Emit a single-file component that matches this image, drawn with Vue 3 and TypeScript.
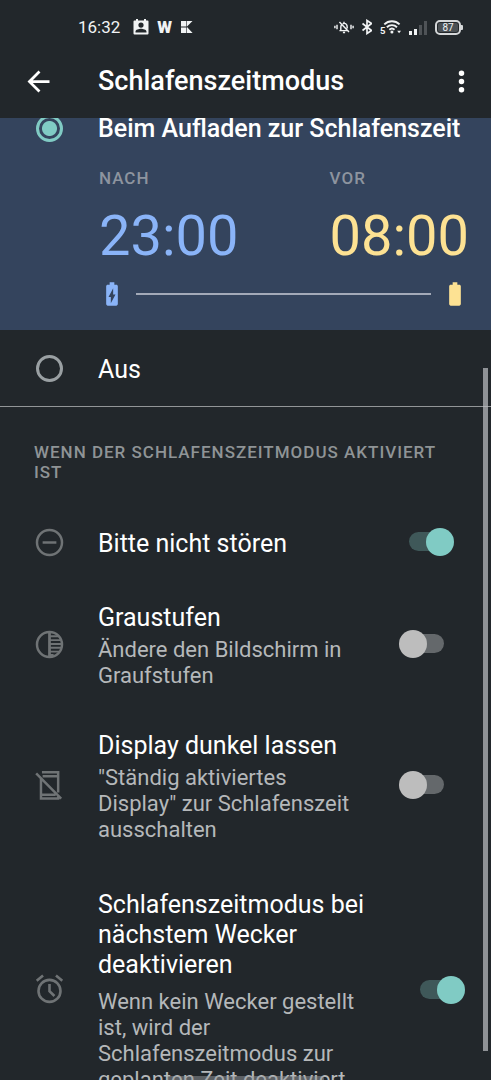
<script setup lang="ts">
import { ref } from 'vue'

interface Setting {
  id: string
  icon: 'dnd' | 'tone' | 'screen' | 'alarm'
  title: string
  detail?: string
  on: boolean
  wide?: boolean
}

const mode = ref<'charging' | 'off'>('charging')

const settings = ref<Setting[]>([
  { id: 'dnd', icon: 'dnd', title: 'Bitte nicht stören', on: true },
  {
    id: 'grey',
    icon: 'tone',
    title: 'Graustufen',
    detail: 'Ändere den Bildschirm in Graufstufen',
    on: false,
  },
  {
    id: 'dark',
    icon: 'screen',
    title: 'Display dunkel lassen',
    detail: '"Ständig aktiviertes Display" zur Schlafenszeit ausschalten',
    on: false,
  },
  {
    id: 'alarm',
    icon: 'alarm',
    title: 'Schlafenszeitmodus bei nächstem Wecker deaktivieren',
    detail: 'Wenn kein Wecker gestellt ist, wird der Schlafenszeitmodus zur geplanten Zeit deaktiviert',
    on: true,
    wide: true,
  },
])
</script>

<template>
  <div class="screen">
    <div class="status">
      <div class="status-group">
        <span class="clock">16:32</span>
        <svg class="contact" viewBox="0 0 16 16" aria-hidden="true">
          <path fill="currentColor" fill-rule="evenodd" d="M3 0h2v1.500h6V0h2v1.500h1.500a1 1 0 0 1 1 1V14.500a1 1 0 0 1-1 1h-13a1 1 0 0 1-1-1V2.500a1 1 0 0 1 1-1H3zM8 3.500a2.600 2.600 0 1 0 0 5.200a2.600 2.600 0 0 0 0-5.200zM2.500 13.500h11v-.8c0-2-3.500-2.900-5.500-2.900s-5.500.9-5.500 2.900z" />
        </svg>
        <span class="brand-w">W</span>
        <svg class="brand-k" viewBox="0 0 12 12" aria-hidden="true">
          <path fill="currentColor" d="M0 0h5.400v5.600H0zM0 6.400h5.400V12H0zM11.500 0H6v5.600zM6 6l5.600 6H6z" />
        </svg>
      </div>
      <div class="status-group status-right">
        <svg class="bell" viewBox="0 0 22 16" fill="none" stroke="currentColor" stroke-width="1.600" aria-hidden="true">
          <path d="M1 6.500v3M3.300 5.500v5M18.700 5.500v5M21 6.500v3M6 12h10M7.500 12V8.200c0-.9.200-1.700.7-2.400M9.600 4.400C10 4.200 10.500 4 11 4c2 0 3.500 1.800 3.500 4.200v1.400M11 4V2.200M6 2.500l10.500 11M9.800 14h2.400" />
        </svg>
        <svg class="bluetooth" viewBox="1 0 10 16" fill="none" stroke="currentColor" stroke-width="1.700" aria-hidden="true">
          <path d="M1.500 4.500l9 7L6 14.500V1.500l4.500 3l-9 7" />
        </svg>
        <svg class="wifi" viewBox="0 0 22 16" aria-hidden="true">
          <path fill="none" stroke="currentColor" stroke-width="2" d="M4.500 5.200c4.500-4.300 11.500-4.300 16 0M7.200 8.200c3-2.900 7.600-2.900 10.600 0M9.800 10.900c1.600-1.500 3.800-1.500 5.400 0" />
          <circle cx="12.500" cy="13.300" r="1.600" fill="currentColor" />
          <path fill="currentColor" d="M18 11.800h4l-2 2.800z" />
          <text class="wifi-band" x="0" y="15">5</text>
        </svg>
        <svg class="signal" viewBox="0 0 18 15" fill="currentColor" aria-hidden="true">
          <path d="M0 11h3v4H0zM5 9h3v6H5z" />
          <path opacity=".22" d="M10 5h3v10h-3zM15 1h3v14h-3z" />
        </svg>
        <span class="battery"><span class="battery-level">87</span></span>
      </div>
    </div>

    <header class="toolbar">
      <button class="icon-button" type="button" aria-label="Zurück">
        <svg viewBox="0 0 24 24"><path fill="currentColor" d="M20 11H7.830l5.590-5.590L12 4l-8 8 8 8 1.410-1.410L7.830 13H20z" /></svg>
      </button>
      <h1>Schlafenszeitmodus</h1>
      <button class="icon-button" type="button" aria-label="Weitere Optionen">
        <svg viewBox="0 0 24 24"><path fill="currentColor" d="M12 8a2 2 0 1 0 0-4a2 2 0 0 0 0 4zM12 10a2 2 0 1 0 0 4a2 2 0 0 0 0-4zM12 16a2 2 0 1 0 0 4a2 2 0 0 0 0-4z" /></svg>
      </button>
    </header>

    <main class="content">
      <section class="schedule">
        <label class="option option-top">
          <input v-model="mode" class="radio" type="radio" name="mode" value="charging" />
          <span>Beim Aufladen zur Schlafenszeit</span>
        </label>
        <div class="times">
          <button class="time start" type="button">
            <span class="caption">NACH</span>
            <span class="value">23:00</span>
          </button>
          <button class="time end" type="button">
            <span class="caption">VOR</span>
            <span class="value">08:00</span>
          </button>
        </div>
        <div class="span">
          <svg class="start" viewBox="0 0 24 24" aria-hidden="true"><path fill="currentColor" d="M15.670 4H14V2h-4v2H8.330C7.600 4 7 4.600 7 5.330v15.330C7 21.400 7.600 22 8.330 22h7.330c.74 0 1.340-.6 1.340-1.330V5.330C17 4.600 16.400 4 15.670 4zM11 20v-5.500H9L13 7v5.500h2z" /></svg>
          <span class="line"></span>
          <svg class="end" viewBox="0 0 24 24" aria-hidden="true"><path fill="currentColor" d="M15.670 4H14V2h-4v2H8.330C7.600 4 7 4.600 7 5.330v15.330C7 21.400 7.600 22 8.330 22h7.330c.74 0 1.340-.6 1.340-1.330V5.330C17 4.600 16.400 4 15.670 4z" /></svg>
        </div>
      </section>

      <label class="option option-off">
        <input v-model="mode" class="radio" type="radio" name="mode" value="off" />
        <span>Aus</span>
      </label>

      <section class="actions">
        <h2 class="caption">WENN DER SCHLAFENSZEITMODUS AKTIVIERT IST</h2>
        <label v-for="s in settings" :key="s.id" class="row" :class="{ wide: s.wide }">
          <svg class="row-icon" viewBox="0 0 24 24" aria-hidden="true">
            <g v-if="s.icon === 'dnd'" fill="none" stroke="currentColor" stroke-width="1.800">
              <circle cx="12" cy="12" r="9.100" />
              <path d="M7 12h10" />
            </g>
            <g v-else-if="s.icon === 'tone'" fill="none" stroke="currentColor" stroke-width="1.800">
              <circle cx="12" cy="12" r="9.100" />
              <path d="M12 3v18" stroke-width="2" />
              <path d="M12 6h6.500M12 8.800h8M12 11.600h9M12 14.400h8.500M12 17.200h7M12 19.600h3" stroke-width="1.400" />
            </g>
            <g v-else-if="s.icon === 'screen'" fill="none" stroke="currentColor" stroke-width="1.800">
              <path d="M5.800 7V21.500H18.300V20M6.500 2.300H18.300V17M7 5.200H18.300M5.800 18.700H16.500M2.300 3.200L20.500 21.500" />
            </g>
            <g v-else fill="none" stroke="currentColor" stroke-width="1.900">
              <circle cx="12" cy="13" r="8" />
              <path d="M12 8v5.200l3.600 3.500M2.700 5.700l4.600-3.800M16.700 1.900l4.600 3.800" />
            </g>
          </svg>
          <span class="row-text">
            <span class="row-title">{{ s.title }}</span>
            <span v-if="s.detail" class="row-detail">{{ s.detail }}</span>
          </span>
          <input v-model="s.on" class="switch" type="checkbox" role="switch" />
        </label>
      </section>
      <span class="scrollbar"></span>
    </main>
    <span class="home-bar"></span>
  </div>
</template>

<style>
body {
  margin: 0;
  background: #22272b;
}
</style>

<style scoped>
.screen {
  position: relative;
  display: flex;
  flex-direction: column;
  height: 100vh;
  overflow: hidden;
  background: #22272b;
  color: #fff;
  font-family: Roboto, "Noto Sans", sans-serif;
  font-size: 25px;
  line-height: 30px;
}

button {
  padding: 0;
  border: 0;
  background: none;
  color: inherit;
  font: inherit;
  text-align: left;
}

svg {
  display: block;
  flex: none;
}

.status {
  display: flex;
  justify-content: space-between;
  align-items: center;
  height: 54px;
  padding: 0 30px 0 78px;
  color: #f1f3f4;
}

.status-group {
  display: flex;
  align-items: center;
}

.clock {
  margin-right: 13px;
  font-size: 17px;
}

.contact {
  width: 16px;
  height: 16px;
  margin-right: 8px;
}

.brand-w {
  margin-right: 9px;
  font-size: 17px;
  font-weight: 900;
}

.brand-k {
  width: 12px;
  height: 12px;
}

.status-right {
  gap: 8px;
}

.bell {
  width: 20px;
  height: 16px;
}

.bluetooth {
  width: 10px;
  height: 16px;
}

.wifi {
  width: 21px;
  height: 16px;
}

.wifi-band {
  fill: currentColor;
  font-size: 10px;
  font-weight: 700;
}

.signal {
  width: 18px;
  height: 15px;
}

.battery {
  position: relative;
  box-sizing: border-box;
  width: 26px;
  height: 15px;
  padding: 1px;
  border: 2px solid #d5d7d9;
  border-radius: 5px;
}

.battery::after {
  content: "";
  position: absolute;
  top: 3px;
  right: -4px;
  width: 2px;
  height: 5px;
  border-radius: 0 1px 1px 0;
  background: #d5d7d9;
}

.battery-level {
  display: block;
  border-radius: 2px;
  background: #4b5054;
  font-size: 10px;
  line-height: 9px;
  text-align: center;
}

.toolbar {
  display: flex;
  align-items: center;
  height: 54px;
  padding: 0 13px 10px 22px;
}

.toolbar h1 {
  flex: 1;
  margin: 0 0 0 43px;
  font-size: 27px;
  font-weight: 500;
}

.icon-button,
.icon-button svg {
  width: 33px;
  height: 33px;
}

.content {
  position: relative;
  flex: 1;
  min-height: 0;
  overflow: hidden;
}

.schedule {
  padding-bottom: 22px;
  background: #34445d;
}

.option {
  display: flex;
  align-items: center;
  gap: 32px;
  padding: 0 22px 0 33px;
  white-space: nowrap;
}

.option-top {
  height: 20px;
  font-weight: 500;
  line-height: 20px;
}

.option-top span {
  padding-top: 2px;
}

.option-off {
  height: 76px;
  border-bottom: 1px solid #929597;
}

.option-off span {
  padding-top: 4px;
}

.radio {
  flex: none;
  appearance: none;
  box-sizing: border-box;
  width: 27px;
  height: 27px;
  margin: 3px;
  border: 3px solid #9aa0a3;
  border-radius: 50%;
}

.radio:checked {
  border-color: #80cbc4;
  background: radial-gradient(circle, #80cbc4 0 7px, transparent 8px);
}

.times {
  display: flex;
  justify-content: space-between;
  padding: 30px 22px 0 99px;
}

.time {
  display: flex;
  flex-direction: column;
}

.caption {
  color: #8d949f;
  font-size: 17px;
  font-weight: 500;
  line-height: 20px;
  letter-spacing: 1px;
}

.value {
  margin-top: 14px;
  font-size: 56px;
  line-height: 68px;
}

.start {
  color: #8ab4f8;
}

.end {
  color: #fde293;
}

.span {
  display: flex;
  align-items: center;
  gap: 10px;
  padding: 10px 22px 0 98px;
}

.span svg {
  width: 28px;
  height: 28px;
}

.line {
  flex: 1;
  height: 2px;
  background: #a3aab8;
}

.actions h2 {
  margin: 0;
  padding: 35px 34px 22px;
  color: #8f9496;
}

.row {
  display: flex;
  align-items: center;
  min-height: 38px;
  padding: 19px 37px 19px 33px;
}

.row.wide {
  padding: 24px 26px 24px 33px;
}

.row-icon {
  width: 33px;
  height: 33px;
  margin-right: 32px;
  color: #6f7375;
}

.row-text {
  flex: 1;
  display: flex;
  flex-direction: column;
  gap: 4px;
  margin-right: 40px;
  padding-top: 4px;
}

.wide .row-text {
  gap: 9px;
}

.row-detail {
  color: #b5b8ba;
  font-size: 22px;
  line-height: 26px;
}

.switch {
  position: relative;
  flex: none;
  appearance: none;
  width: 55px;
  height: 28px;
  margin: 0;
}

.switch::before {
  content: "";
  position: absolute;
  inset: 4px 10px 5px;
  border-radius: 10px;
  background: #64686b;
}

.switch::after {
  content: "";
  position: absolute;
  top: 0;
  left: 0;
  width: 28px;
  height: 28px;
  border-radius: 50%;
  background: #bdbdbd;
}

.switch:checked::before {
  background: #3f5859;
}

.switch:checked::after {
  left: 27px;
  background: #80cbc4;
}

.scrollbar {
  position: absolute;
  bottom: 3%;
  right: 3px;
  width: 5px;
  height: 71%;
  background: rgba(190, 192, 196, 0.7);
}

.home-bar {
  position: absolute;
  bottom: 0;
  left: 34%;
  width: 32%;
  height: 4px;
  border-radius: 2px 2px 0 0;
  background: rgba(150, 154, 158, 0.5);
}
</style>
